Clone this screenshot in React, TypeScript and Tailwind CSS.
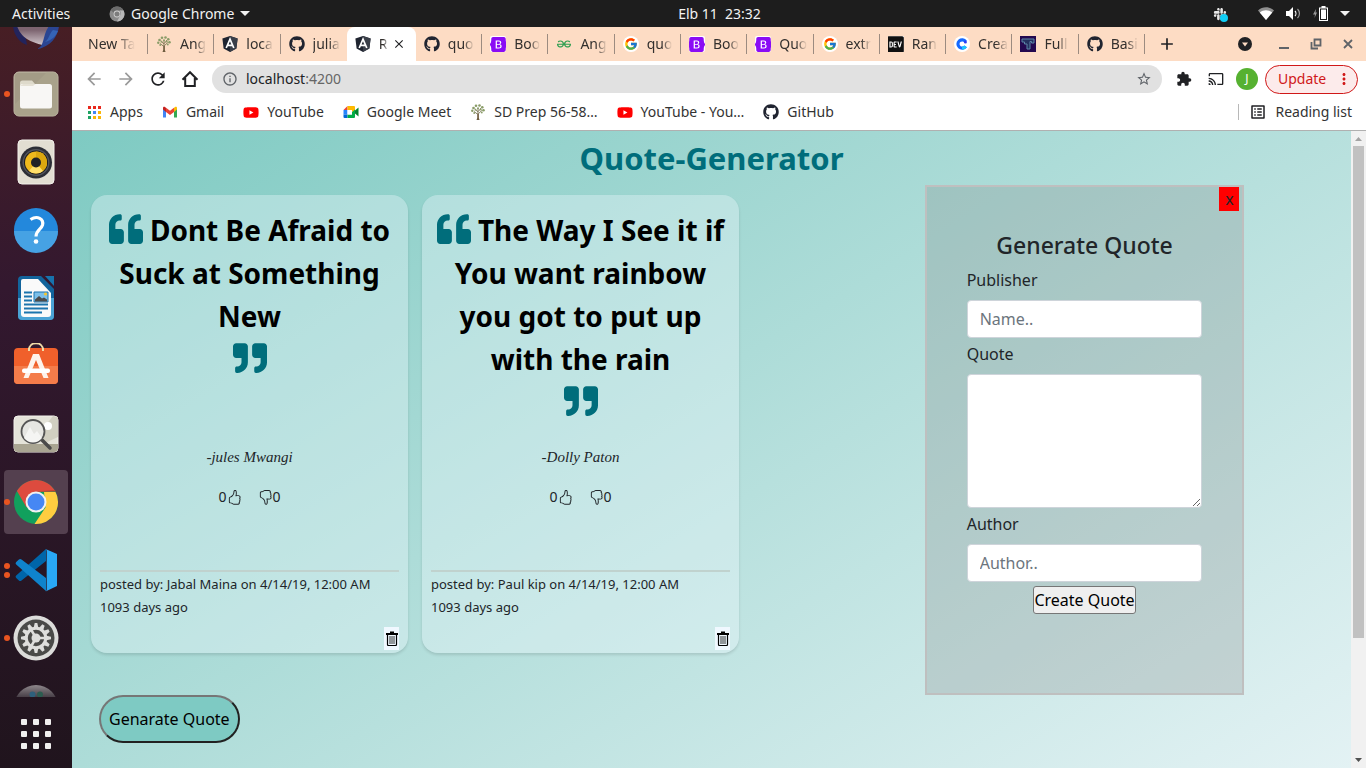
import React, { useState } from "react";
import { FaBootstrap, FaDev, FaGithub, FaQuoteLeft, FaQuoteRight, FaSlack, FaYoutube } from "react-icons/fa";
import { BsHandThumbsDown, BsHandThumbsUp } from "react-icons/bs";
import { FcGoogle } from "react-icons/fc";
import { SiGeeksforgeeks } from "react-icons/si";
import { MdAdd, MdArrowBack, MdArrowForward, MdCast, MdClose, MdExtension, MdInfoOutline, MdMoreVert, MdOutlineListAlt, MdRefresh, MdStarBorder } from "react-icons/md";

type IconProps = { className?: string };

/* ---------- small drawings ---------- */

function TreeIcon() {
  return (
    <svg width="16" height="16" viewBox="0 0 16 16">
      <path d="M7.300 10L4 7.500M8.600 9.500l3.200-3M8 10V4M7.800 8L5 4.500M8.400 7.500L11 4" stroke="#7d7755" strokeWidth=".9" fill="none" />
      <path d="M6.500 16l.7-2V9.500h1.700V14l.7 2z" fill="#6f5d40" />
      <g fill="#8a9c68">
        <circle cx="2.300" cy="6.800" r="1.200" /><circle cx="3.500" cy="4" r="1.300" /><circle cx="6" cy="1.800" r="1.300" /><circle cx="9.500" cy="1.500" r="1.300" />
        <circle cx="12.300" cy="3.300" r="1.300" /><circle cx="13.500" cy="6.300" r="1.300" /><circle cx="5.300" cy="5.800" r=".9" /><circle cx="8" cy="4.200" r="1" />
        <circle cx="10.800" cy="5.500" r=".9" /><circle cx="11.800" cy="8.500" r=".9" /><circle cx="4.200" cy="9" r=".9" />
      </g>
    </svg>
  );
}

function AngularIcon() {
  return (
    <svg width="16" height="16" viewBox="0 0 16 16">
      <path d="M8 0l7.600 2.600-1.200 9.800L8 16l-6.400-3.600L.4 2.600z" fill="#1f2430" />
      <path d="M8 0l7.600 2.600-1.200 9.800L8 16z" fill="#3a3f49" />
      <path d="M4.200 12L8 3.200 11.800 12M5.600 9.400h4.800" stroke="#fff" strokeWidth="1.700" fill="none" />
    </svg>
  );
}

function BootstrapIcon() {
  return (
    <span className="flex size-4 items-center justify-center overflow-hidden rounded-xs bg-white">
      <FaBootstrap className="size-[19px] shrink-0 text-[#8a0cf5]" />
    </span>
  );
}

function GoogleIcon() {
  return (
    <span className="flex size-4 items-center justify-center rounded-full bg-white">
      <FcGoogle className="size-[14px]" />
    </span>
  );
}

function DevIcon() {
  return (
    <span className="flex size-4 items-center justify-center overflow-hidden bg-white">
      <FaDev className="size-[19px] shrink-0 text-[#101010]" />
    </span>
  );
}

function CIcon() {
  return (
    <svg width="16" height="16" viewBox="0 0 16 16">
      <circle cx="8" cy="8" r="8" fill="#fff" />
      <path d="M11.600 10.400A4.200 4.200 0 1 1 11.600 5.600" stroke="#1569ff" strokeWidth="3.200" fill="none" />
      <path d="M8 12.200a4.200 4.200 0 0 0 3.600-1.800" stroke="#19c8ff" strokeWidth="3.200" fill="none" />
      <circle cx="11.400" cy="5.900" r="1.500" fill="#2a3df5" />
    </svg>
  );
}

function TIcon() {
  return (
    <svg width="16" height="16" viewBox="0 0 16 16">
      <path d="M0 0h16v16H0z" fill="#24094f" />
      <path d="M2 3h12v4h-2.500V5.500H10V13H7V8H4.500V6H2z" fill="#24305f" stroke="#5c86a8" strokeWidth="1" />
    </svg>
  );
}

function GmailIcon() {
  return (
    <svg width="16" height="16" viewBox="0 0 16 16">
      <path d="M1 4v9.500h3V7z" fill="#4285f4" />
      <path d="M12 7v6.500h3V4z" fill="#34a853" />
      <path d="M1 3.500l1-1 2 1.300V8L1 5.600z" fill="#c5221f" />
      <path d="M4 3.800l4 3 4-3V8l-4 3-4-3z" fill="#ea4335" />
      <path d="M12 3.800l2-1.300 1 1v2.100L12 8z" fill="#fbbc04" />
    </svg>
  );
}

function MeetIcon() {
  return (
    <svg width="16" height="16" viewBox="0 0 16 16">
      <path d="M.5 6L4.500 2v4z" fill="#ea4335" />
      <path d="M.5 6h4v4.500h-4z" fill="#2684fc" />
      <path d="M.5 10.500h4V14H1.500a1 1 0 0 1-1-1z" fill="#0066da" />
      <path d="M4.500 2H11a1 1 0 0 1 1 1v3.500L9 8V6H4.500z" fill="#ffba00" />
      <path d="M4.500 10.500H9V8l3-2.500V13a1 1 0 0 1-1 1H4.500z" fill="#00ac47" />
      <path d="M12 6.500L15.500 3.500v9L12 9.500z" fill="#00832d" />
      <path d="M4.500 6H9v4.500H4.500z" fill="#fff" />
    </svg>
  );
}

function AppsGridIcon() {
  const colors = ["#e8281c", "#e8281c", "#e8281c", "#1ea362", "#4285f4", "#fbb605", "#1ea362", "#fbb605", "#fbb605"];
  return (
    <svg width="13" height="13" viewBox="0 0 13 13" shapeRendering="crispEdges">
      {colors.map((c, i) => (
        <rect key={i} x={(i % 3) * 5} y={Math.floor(i / 3) * 5} width="3" height="3" fill={c} />
      ))}
    </svg>
  );
}

function HomeIcon() {
  return (
    <svg width="18" height="18" viewBox="0 0 18 18" fill="none" stroke="#202124" strokeWidth="2">
      <path d="M1.500 9.800L9 2.200l7.500 7.600M4.200 8v8h9.600V8" />
    </svg>
  );
}

function ChromeMono() {
  return (
    <svg width="16" height="16" viewBox="0 0 16 16">
      <circle cx="8" cy="8" r="7.500" fill="#8b8b8b" />
      <path d="M8 .5a7.500 7.500 0 0 1 6.600 4H8a3.500 3.500 0 0 0-3.300 2.300L1.600 4A7.500 7.500 0 0 1 8 .5z" fill="#6c6c6c" />
      <path d="M14.600 4.500A7.500 7.500 0 0 1 8 15.500l3.200-5.900A3.500 3.500 0 0 0 10.500 4.500z" fill="#b9b9b9" />
      <circle cx="8" cy="8" r="3.400" fill="#cfcfcf" />
      <circle cx="8" cy="8" r="2.500" fill="#7c7c7c" />
    </svg>
  );
}

/* ---------- dock drawings ---------- */

function MailAppIcon() {
  return (
    <svg width="48" height="48" viewBox="0 0 48 48" className="shrink-0">
      <defs>
        <linearGradient id="env" x1="0" y1="0" x2="0" y2="1">
          <stop offset="0.2" stopColor="#7d6470" />
          <stop offset="1" stopColor="#d5cbd0" />
        </linearGradient>
      </defs>
      <path d="M1 24C2 34 8 41 15 43L12 26z" fill="#23245c" />
      <path d="M5 24h33l-5 20C21 40 10 38 5 24z" fill="url(#env)" />
      <path d="M25 47c8-3 5-13 12-23h10c-1 10-8 21-22 23z" fill="#2a4592" />
      <path d="M33 40c4-3 4-8 8-12l5 1c-2 5-6 9-13 11z" fill="#3563b5" />
    </svg>
  );
}

function FilesAppIcon() {
  return (
    <svg width="46" height="46" viewBox="0 0 46 46">
      <rect x="1" y="1" width="44" height="44" rx="5" fill="#a39b86" stroke="#c3bda9" />
      <path d="M1 34L34 1h6a5 5 0 0 1 5 5v34a5 5 0 0 1-5 5H6a5 5 0 0 1-5-5z" fill="#aea68f" opacity=".6" />
      <path d="M7 12a2.500 2.500 0 0 1 2.500-2.500H19l3 3.500h12v6H7z" fill="#dedacb" />
      <rect x="7" y="13" width="32" height="24.500" rx="2.500" fill="#f8f7f5" />
      <path d="M7 15h13l2.500-2H10z" fill="#e6e2d6" />
    </svg>
  );
}

function MusicAppIcon() {
  return (
    <svg width="46" height="46" viewBox="0 0 46 46">
      <rect x="5" y="1" width="36" height="44" rx="4" fill="#e2ded2" stroke="#f2f0ea" />
      <circle cx="23" cy="23.500" r="16" fill="#2c2e36" />
      <circle cx="23" cy="23.500" r="13.500" fill="#53555c" />
      <circle cx="23" cy="23.500" r="12" fill="#1c1c1f" />
      <circle cx="23" cy="23.500" r="11" fill="#efb91d" />
      <path d="M23 12.500a11 11 0 0 1 7 19.500l-7-8.500z" fill="#dba70f" />
      <path d="M16 32a11 11 0 0 0 14 0l-7-8.500z" fill="#ffdf6a" />
      <circle cx="23" cy="23.500" r="5" fill="#222226" />
    </svg>
  );
}

function HelpAppIcon() {
  return (
    <svg width="46" height="46" viewBox="0 0 46 46">
      <circle cx="23" cy="23" r="22" fill="#2388dc" />
      <path d="M1 24a22 22 0 0 0 44 0z" fill="#46a2e4" />
      <path d="M17.500 12.500c7-4.500 13.500-.5 12 5.500-1.300 4.500-6.500 5.500-6.500 11.500" stroke="#fff" strokeWidth="3.200" fill="none" />
      <circle cx="23" cy="34.500" r="2.300" fill="#fff" />
    </svg>
  );
}

function WriterAppIcon() {
  return (
    <svg width="46" height="46" viewBox="0 0 46 46">
      <path d="M9 1h19l13 13v27a4 4 0 0 1-4 4H9a4 4 0 0 1-4-4V5a4 4 0 0 1 4-4z" fill="#12649c" />
      <path d="M5 23h36v18a4 4 0 0 1-4 4H9a4 4 0 0 1-4-4z" fill="#4aa3d5" />
      <path d="M32 1h9v10z" fill="#1773ad" />
      <path d="M10 4h15l13 14v21a3 3 0 0 1-3 3H11a3 3 0 0 1-3-3V6a2 2 0 0 1 2-2z" fill="#fafafa" />
      <path d="M11 17.500h8M11 21.500h8M11 25.500h8M11 29.500h24M11 33.500h24M11 37.500h18" stroke="#1c75ae" strokeWidth="2" />
      <path d="M21 17h14v10H21z" fill="#7cc0ea" stroke="#1c75ae" />
      <path d="M22 26.500v-2l4-3.500 3 2.500 2-1 3 2v2z" fill="#4b4b4b" />
      <circle cx="32.500" cy="19" r="1.600" fill="#f4c531" />
    </svg>
  );
}

function SoftwareAppIcon() {
  return (
    <svg width="46" height="46" viewBox="0 0 46 46">
      <path d="M16 7c0-9 14-9 14 0" stroke="#f0dca8" strokeWidth="2" fill="none" />
      <rect x="1" y="5" width="44" height="36" rx="4" fill="#f0602b" />
      <path d="M1 23h44v14a4 4 0 0 1-4 4H5a4 4 0 0 1-4-4z" fill="#f47c4a" />
      <path d="M16 5v3M30 5v3" stroke="#f0dca8" strokeWidth="2" />
      <path d="M10.500 35L20 11h6l9.500 24h-5L23 17l-7.500 18z" fill="#fdf3ec" />
      <rect x="9" y="25.500" width="28" height="4.500" rx="2" fill="#fff" />
    </svg>
  );
}

function ViewerAppIcon() {
  return (
    <svg width="46" height="46" viewBox="0 0 46 46">
      <rect x="1" y="5" width="44" height="36" rx="4" fill="#e4e3d9" stroke="#f3f2ec" />
      <path d="M45 6v20L30 33l-6-8L40 5z" fill="#d1cfc1" />
      <path d="M1 33h44v4a4 4 0 0 1-4 4H5a4 4 0 0 1-4-4z" fill="#a9a592" />
      <circle cx="35" cy="15" r="4" fill="#fff" />
      <path d="M29 29l8 8" stroke="#4a4a4a" strokeWidth="3.500" strokeLinecap="round" />
      <circle cx="20" cy="20.500" r="11.500" fill="#e6e6e2" stroke="#555" strokeWidth="1.800" />
      <path d="M11 27l6-11 4 7 3-3 5 7c-5 6-13 6-18 0z" fill="#f5f5f3" />
    </svg>
  );
}

function ChromeAppIcon() {
  return (
    <svg width="46" height="46" viewBox="0 0 46 46">
      <circle cx="23" cy="23" r="22" fill="#11a05d" />
      <path d="M3.950 12A22 22 0 0 1 42.050 12L23 13 13.500 28.500z" fill="#dd4b3e" />
      <path d="M42.050 12A22 22 0 0 1 21.500 45L32.500 28.500 31 13H42.600z" fill="#ffcd40" />
      <path d="M23 12.500h19.600l-.6-1.500z" fill="#c23c30" />
      <circle cx="23" cy="23" r="10.500" fill="#f1f1f1" />
      <circle cx="23" cy="23" r="8.500" fill="#4687f4" />
    </svg>
  );
}

function CodeAppIcon() {
  return (
    <svg width="46" height="46" viewBox="0 0 46 46">
      <path d="M33 2v12L8.500 33.500a2 2 0 0 1-2.600 0l-2.700-2.600a1.600 1.600 0 0 1 0-2.400z" fill="#0065a9" />
      <path d="M33 44V31L8.500 12.500a2 2 0 0 0-2.600 0l-2.700 2.600a1.600 1.600 0 0 0 0 2.400z" fill="#0f83cc" />
      <path d="M32.500 2L44 7v32L32.500 44.500c1-.5 1.200-1.500 1.200-2.500V4.500c0-1-.3-2-1.200-2.500z" fill="#29a8f5" />
    </svg>
  );
}

function SettingsAppIcon() {
  const teeth = Array.from({ length: 12 }, (_, i) => i * 30);
  return (
    <svg width="46" height="46" viewBox="0 0 46 46">
      <circle cx="23" cy="23" r="22.500" fill="#dcdcda" />
      <circle cx="23" cy="23" r="18.500" fill="#4a4a48" />
      {teeth.map((a) => (
        <path key={a} d="M20.500 13.500l1.200-5.500h2.600l1.200 5.500z" fill="#dededc" transform={`rotate(${a} 23 23)`} />
      ))}
      <circle cx="23" cy="23" r="9.700" fill="none" stroke="#dededc" strokeWidth="3" />
      <path d="M23 23L18 14.500M23 23h10M23 23l-5 8.500" stroke="#dededc" strokeWidth="2.500" />
      <circle cx="23" cy="23" r="4.500" fill="#dededc" />
    </svg>
  );
}

function PeekAppIcon() {
  return (
    <svg width="46" height="46" viewBox="0 0 46 46" className="shrink-0">
      <defs>
        <linearGradient id="peek" x1="0" y1="0" x2="0" y2=".35">
          <stop offset="0" stopColor="#8d878b" />
          <stop offset="1" stopColor="#352b34" />
        </linearGradient>
      </defs>
      <circle cx="23" cy="23" r="22" fill="url(#peek)" />
      <circle cx="19.500" cy="10.500" r="3" fill="#2e5f7b" />
      <circle cx="27" cy="10.500" r="3" fill="#2d5c50" />
    </svg>
  );
}

function DockItem({ label, dots = 0, active = false, children }: { label: string; dots?: number; active?: boolean; children: React.ReactNode }) {
  return (
    <button type="button" aria-label={label} className="flex h-16 w-full shrink-0 items-center justify-center">
      <span className={active ? "relative flex size-16 items-center justify-center rounded bg-[#54404f]" : "relative flex size-16 items-center justify-center"}>
        <span className="absolute inset-y-0 left-0 flex flex-col justify-center gap-[3px]">
          {Array.from({ length: dots }, (_, i) => (
            <span key={i} className="size-[6px] rounded-full bg-[#e95420]" />
          ))}
        </span>
        {children}
      </span>
    </button>
  );
}

function Dock() {
  return (
    <nav aria-label="Dock" className="flex w-[72px] shrink-0 flex-col gap-1 overflow-hidden bg-linear-to-b from-[#471e24] via-[#33182f] via-35% to-[#20141d]">
      <div className="flex h-[31px] shrink-0 items-end justify-center overflow-hidden pb-[8px]"><MailAppIcon /></div>
      <DockItem label="Files" dots={1}><FilesAppIcon /></DockItem>
      <DockItem label="Rhythmbox"><MusicAppIcon /></DockItem>
      <DockItem label="Help"><HelpAppIcon /></DockItem>
      <DockItem label="LibreOffice Writer"><WriterAppIcon /></DockItem>
      <DockItem label="Ubuntu Software"><SoftwareAppIcon /></DockItem>
      <DockItem label="Image Viewer"><ViewerAppIcon /></DockItem>
      <DockItem label="Google Chrome" dots={1} active><ChromeAppIcon /></DockItem>
      <DockItem label="Visual Studio Code" dots={2}><CodeAppIcon /></DockItem>
      <DockItem label="Settings" dots={1}><SettingsAppIcon /></DockItem>
      <div className="flex h-[23px] shrink-0 items-start justify-center overflow-hidden pt-[10px]"><PeekAppIcon /></div>
      <button type="button" aria-label="Show applications" className="flex grow items-center justify-center pb-[2px]">
        <span className="grid grid-cols-3 gap-[6px]">
          {Array.from({ length: 9 }, (_, i) => (
            <span key={i} className="size-[6px] rounded-[1px] bg-[#f1efef]" />
          ))}
        </span>
      </button>
    </nav>
  );
}

/* ---------- desktop and browser bars ---------- */

function TopBar() {
  return (
    <header className="grid h-[27px] shrink-0 grid-cols-[1fr_auto_1fr] items-center bg-[#1d1d1d] text-sm text-[#f2f2f2]">
      <div className="flex items-center pl-3">
        <span className="w-[97px]">Activities</span>
        <ChromeMono />
        <span className="ml-[6px]">Google Chrome</span>
        <svg width="10" height="5" viewBox="0 0 10 5" className="ml-[6px]"><path d="M0 0h10L5 5z" fill="#f2f2f2" /></svg>
      </div>
      <span className="pl-[73px] whitespace-pre">Elb 11  23:32</span>
      <div className="flex items-center justify-end pr-4">
        <span className="relative mr-[31px] flex">
          <FaSlack className="size-[14px] text-[#e6e6e6]" />
          <span className="absolute -right-px -bottom-px size-2 rounded-full bg-[#10cdf5]" />
        </span>
        <svg width="16" height="13" viewBox="0 0 16 13" className="mr-3">
          <path d="M0 3.500C4.500-.7 11.500-.7 16 3.500L8 13z" fill="#8f8f8f" />
          <path d="M1.800 5.600c3.600-3 8.800-3 12.400 0L8 13z" fill="#fff" />
        </svg>
        <svg width="15" height="13" viewBox="0 0 15 13" className="mr-3">
          <path d="M0 4h3l4-4v13L3 9H0z" fill="#fff" />
          <path d="M9 4c1.200 1.300 1.200 3.700 0 5" stroke="#fff" strokeWidth="1.200" fill="none" />
          <path d="M11.500 2c2.600 2.600 2.600 6.400 0 9" stroke="#999" strokeWidth="1.200" fill="none" />
        </svg>
        <svg width="15" height="15" viewBox="0 0 15 15" className="mr-3">
          <path d="M3 3L0 8.500h2L1.500 12 4 6.500H2.500z" fill="#9a9a9a" />
          <path d="M8.500 0h4v1.500H15V15H6V1.500h2.500z" fill="#fff" />
          <path d="M7 2.500h7V14H7z" fill="#1d1d1d" />
          <path d="M8 3.500h5V13H8z" fill="#fff" />
        </svg>
        <svg width="10" height="5" viewBox="0 0 10 5"><path d="M0 0h10L5 5z" fill="#f2f2f2" /></svg>
      </div>
    </header>
  );
}

type TabInfo = { text: string; icon?: React.ReactNode; active?: boolean; last?: boolean };

const github = <FaGithub className="size-4 text-[#202430]" />;

const tabs: TabInfo[] = [
  { text: "Ang", icon: <TreeIcon /> },
  { text: "loca", icon: <AngularIcon /> },
  { text: "julia", icon: github, last: true },
  { text: "R", icon: <AngularIcon />, active: true },
  { text: "quo", icon: github },
  { text: "Boo", icon: <BootstrapIcon /> },
  { text: "Ang", icon: <SiGeeksforgeeks className="size-[14px] text-[#2f9e50]" /> },
  { text: "quo", icon: <GoogleIcon /> },
  { text: "Boo", icon: <BootstrapIcon /> },
  { text: "Quo", icon: <BootstrapIcon /> },
  { text: "extr", icon: <GoogleIcon /> },
  { text: "Ran", icon: <DevIcon /> },
  { text: "Crea", icon: <CIcon /> },
  { text: "Full", icon: <TIcon /> },
  { text: "Basi", icon: github },
];

function TabStrip() {
  return (
    <div className="flex h-[34px] shrink-0 items-center bg-[#fddcc4] pr-3 text-sm text-[#33302e]">
      <div role="tablist" className="flex h-full w-[1073px] min-w-0 shrink items-center">
        <div role="tab" className="flex h-5 w-[76px] shrink-0 items-center border-r border-[#9c8b80] pl-4">
          <span className="whitespace-nowrap mask-r-from-60%">New Ta</span>
        </div>
        {tabs.map((t, i) =>
          t.active ? (
            <div key={i} role="tab" aria-selected="true" className="ml-px flex h-full w-[69px] shrink-0 items-center rounded-t-lg bg-white pl-2">
              <span className="flex size-4 shrink-0 items-center justify-center">{t.icon}</span>
              <span className="ml-2 mask-r-from-50%">{t.text}</span>
              <button type="button" aria-label="Close tab" className="ml-1"><MdClose className="size-[14px] text-[#202124]" /></button>
            </div>
          ) : (
            <div key={i} role="tab" className={t.last ? "flex h-5 min-w-0 flex-1 items-center pl-2" : "flex h-5 min-w-0 flex-1 items-center border-r border-[#9c8b80] pl-2"}>
              <span className="flex size-4 shrink-0 items-center justify-center">{t.icon}</span>
              <span className="ml-2 whitespace-nowrap mask-r-from-60%">{t.text}</span>
            </div>
          ),
        )}
      </div>
      <button type="button" aria-label="New tab" className="ml-3"><MdAdd className="size-5 text-[#202124]" /></button>
      <div className="ml-auto flex items-center gap-5 text-[#5f6368]">
        <svg width="14" height="14" viewBox="0 0 14 14" className="mr-[6px]"><circle cx="7" cy="7" r="7" fill="#202124" /><path d="M4 5.500h6L7 9.500z" fill="#fddcc4" /></svg>
        <svg width="12" height="12" viewBox="0 0 12 12"><path d="M1 9h10v2H1z" fill="currentColor" /></svg>
        <svg width="12" height="12" viewBox="0 0 12 12" fill="none" stroke="currentColor" strokeWidth="1.800"><path d="M4.500 1.500h6v6h-6zM1.500 4v6.500H8" /></svg>
        <svg width="12" height="12" viewBox="0 0 12 12" stroke="currentColor" strokeWidth="1.800"><path d="M2 2l8 8M10 2l-8 8" /></svg>
      </div>
    </div>
  );
}

function Toolbar() {
  return (
    <div className="flex h-9 shrink-0 items-center bg-white pr-2 pl-3">
      <div className="flex items-center gap-3">
        <button type="button" aria-label="Back"><MdArrowBack className="size-5 text-[#9a9a9a]" /></button>
        <button type="button" aria-label="Forward"><MdArrowForward className="size-5 text-[#9a9a9a]" /></button>
        <button type="button" aria-label="Reload"><MdRefresh className="size-5 text-[#202124]" /></button>
        <button type="button" aria-label="Home" className="px-px"><HomeIcon /></button>
      </div>
      <div className="ml-3 flex h-7 min-w-0 flex-1 items-center rounded-full bg-[#e1e1e1] px-[10px] text-sm">
        <MdInfoOutline className="size-4 text-[#5f6368]" />
        <span className="ml-2 text-[#202124]">localhost<span className="text-[#666]">:4200</span></span>
        <MdStarBorder className="ml-auto size-4 text-[#5f6368]" />
      </div>
      <div className="flex items-center">
        <MdExtension className="ml-[14px] size-4 text-[#202124]" />
        <MdCast className="ml-4 size-4 text-[#202124]" />
        <span className="ml-3 flex size-[22px] items-center justify-center rounded-full bg-[#56b131] text-xs text-white">J</span>
        <button type="button" className="ml-[7px] flex h-[29px] w-[93px] items-center justify-between rounded-full border border-[#d01818] bg-[#fcebeb] pl-3 pr-1 text-sm text-[#d01818]">
          Update<MdMoreVert className="size-[18px]" />
        </button>
      </div>
    </div>
  );
}

const yt = <FaYoutube className="size-[17px] text-[#f00]" />;

const bookmarks = [
  { text: "Apps", icon: <AppsGridIcon /> },
  { text: "Gmail", icon: <GmailIcon /> },
  { text: "YouTube", icon: yt },
  { text: "Google Meet", icon: <MeetIcon /> },
  { text: "SD Prep 56-58…", icon: <TreeIcon /> },
  { text: "YouTube - You…", icon: yt },
  { text: "GitHub", icon: github },
];

function BookmarksBar() {
  return (
    <div className="shrink-0 border-b border-[#b0b0b0] bg-white pb-[3px]">
      <div className="flex h-[30px] items-center gap-[19px] px-[14px] text-sm whitespace-nowrap text-[#333]">
        {bookmarks.map((b) => (
          <a key={b.text} href="#" className="flex items-center gap-2">
            <span className="flex size-4 items-center justify-center">{b.icon}</span>
            {b.text}
          </a>
        ))}
        <button type="button" className="ml-auto flex h-4 items-center gap-2 border-l border-[#b8b8b8] pl-[10px]">
          <MdOutlineListAlt className="size-[18px] text-[#202124]" />
          Reading list
        </button>
      </div>
    </div>
  );
}

/* ---------- the page ---------- */

type Quote = { text: string; author: string; publisher: string; posted: string; days: number };

const quotes: Quote[] = [
  { text: "Dont Be Afraid to Suck at Something New", author: "jules Mwangi", publisher: "Jabal Maina", posted: "4/14/19, 12:00 AM", days: 1093 },
  { text: "The Way I See it if You want rainbow you got to put up with the rain", author: "Dolly Paton", publisher: "Paul kip", posted: "4/14/19, 12:00 AM", days: 1093 },
];

function TrashIcon({ className }: IconProps) {
  return (
    <svg viewBox="0 0 12 15" className={className} fill="none" stroke="#000">
      <path d="M0 3h12M4 1.500h4" strokeWidth="2" />
      <path d="M1.500 4v9.500q0 1 1 1h7q1 0 1-1V4" strokeWidth="1.200" />
      <path d="M4 5v8M6 5v8M8 5v8" strokeWidth=".8" />
    </svg>
  );
}

function QuoteCard({ quote }: { quote: Quote }) {
  const [likes, setLikes] = useState(0);
  const [dislikes, setDislikes] = useState(0);
  return (
    <article className="flex h-[458px] w-[317px] flex-col rounded-2xl bg-[#f0f8ff]/35 px-[9px] pt-[14px] pb-[3px] shadow-[0_2px_3px_rgba(0,0,0,0.12)]">
      <div className="h-[236px] px-1 text-center text-[28px] leading-[43px] font-bold text-black">
        <p>
          <FaQuoteLeft className="mr-[7px] -mt-2 inline size-[34px] text-[#006d7b]" />
          {quote.text}
        </p>
        <FaQuoteRight className="mx-auto mt-[3px] size-[34px] text-[#006d7b]" />
      </div>
      <p className="text-center font-['Liberation_Serif',serif] text-[15px] leading-6 italic">-{quote.author}</p>
      <div className="mt-4 flex h-6 items-center justify-center gap-4 text-sm">
        <button type="button" aria-label="Like" className="flex items-center" onClick={() => setLikes(likes + 1)}>
          {likes}<BsHandThumbsUp className="size-[15px]" />
        </button>
        <button type="button" aria-label="Dislike" className="flex items-center" onClick={() => setDislikes(dislikes + 1)}>
          <BsHandThumbsDown className="size-[15px]" />{dislikes}
        </button>
      </div>
      <div className="mt-auto border-t-2 border-[#c0d2ce] pt-px text-[13px] leading-[23px]">
        <p>posted by: {quote.publisher} on {quote.posted}</p>
        <p>{quote.days} days ago</p>
      </div>
      <button type="button" aria-label="Delete quote" className="mt-2 flex h-[23px] w-[15px] items-center justify-center self-end bg-[#f0f8ff]">
        <TrashIcon className="h-[15px] w-3" />
      </button>
    </article>
  );
}

function QuoteForm() {
  const field = "block w-full rounded border border-[#ced4da] bg-white px-3 leading-6 text-[#212529] placeholder:text-[#6c757d]";
  return (
    <form className="relative h-[510px] w-3/4 border-2 border-[#bfbfbf] bg-[#808080]/25 px-10 pt-[42px]" onSubmit={(e) => e.preventDefault()}>
      <button type="button" aria-label="Close" className="absolute top-0 right-[3px] h-6 w-5 bg-[#f00] leading-6">x</button>
      <h2 className="text-center text-[23px] leading-8 font-medium">Generate Quote</h2>
      <label htmlFor="publisher" className="mt-[7px] block leading-6">Publisher</label>
      <input id="publisher" placeholder="Name.." className={`mt-2 h-[38px] ${field}`} />
      <label htmlFor="quote" className="mt-1 block leading-6">Quote</label>
      <textarea id="quote" className={`mt-2 h-[134px] ${field}`} />
      <label htmlFor="author" className="mt-1 block leading-6">Author</label>
      <input id="author" placeholder="Author.." className={`mt-2 h-[38px] ${field}`} />
      <button type="submit" className="mx-auto mt-1 block h-7 rounded-[3px] border border-[#767676] bg-[#efefef] leading-6 text-black">Create Quote</button>
    </form>
  );
}

function Scrollbar() {
  return (
    <div aria-hidden="true" className="flex w-[15px] shrink-0 flex-col items-center bg-[#f1f1f1]">
      <svg width="15" height="15" viewBox="0 0 15 15"><path d="M4 10h7L7.500 6z" fill="#a3a3a3" /></svg>
      <div className="flex w-full grow flex-col items-center">
        <div className="h-[81%] w-[11px] bg-[#c1c1c1]" />
      </div>
      <svg width="15" height="15" viewBox="0 0 15 15"><path d="M4 5h7L7.500 9z" fill="#505050" /></svg>
    </div>
  );
}

function QuotePage() {
  return (
    <main className="min-w-0 flex-1 overflow-hidden">
      <div className="min-h-[785px] bg-linear-to-br from-[#7ecac2] to-[#edf6f9] text-base text-[#212529]">
        <h1 className="pt-[5px] pb-[5px] text-center text-[31px] leading-[44px] font-bold text-[#006d7b]">Quote-Generator</h1>
        <div className="grid grid-cols-[2fr_1fr]">
          <section className="pt-[10px] pl-[19px]">
            <div className="flex flex-wrap gap-[14px]">
              {quotes.map((q) => <QuoteCard key={q.author} quote={q} />)}
            </div>
            <button type="button" className="mt-[42px] ml-2 h-12 rounded-full border-2 border-t-[#767676] border-r-[#212121] border-b-[#212121] border-l-[#767676] bg-[#7ecac3] px-2 text-black">Genarate Quote</button>
          </section>
          <QuoteForm />
        </div>
      </div>
    </main>
  );
}

export default function App() {
  return (
    <div className="flex h-screen flex-col overflow-hidden font-['Noto_Sans','Open_Sans',sans-serif]">
      <TopBar />
      <div className="flex min-h-0 flex-1">
        <Dock />
        <div className="flex min-w-0 flex-1 flex-col">
          <TabStrip />
          <Toolbar />
          <BookmarksBar />
          <div className="flex min-h-0 flex-1">
            <QuotePage />
            <Scrollbar />
          </div>
        </div>
      </div>
    </div>
  );
}
